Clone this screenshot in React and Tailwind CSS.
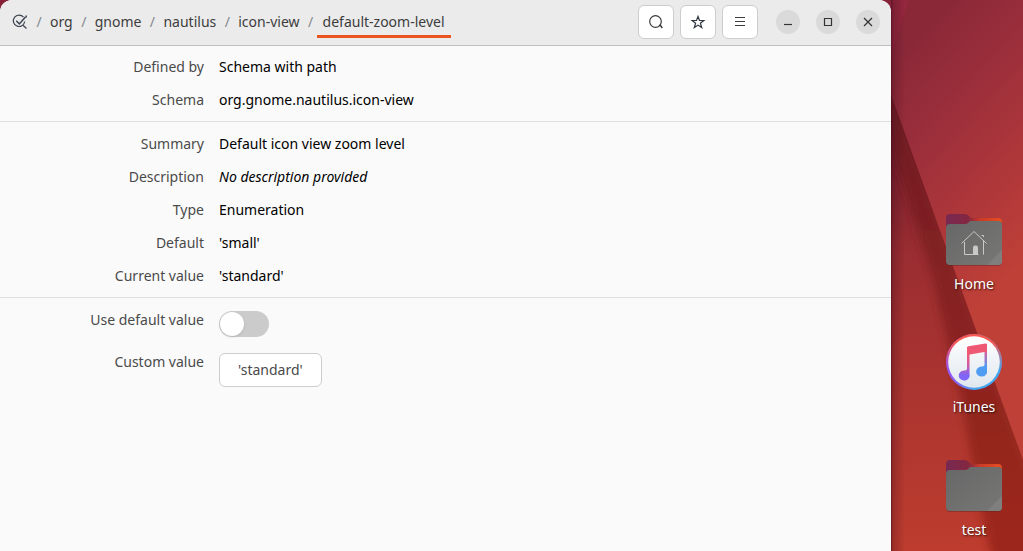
import { useState } from 'react';

const crumbs = ['org', 'gnome', 'nautilus', 'icon-view'];

const SearchIcon = () => (
  <svg className="w-4 h-4" viewBox="0 0 16 16" fill="none" stroke="#3d3d3d" strokeWidth="1.2">
    <circle cx="7.500" cy="7.500" r="5.800" />
    <path d="M11 11.500h1.500l1.800 2.500" strokeWidth="1.5" />
  </svg>
);

const StarIcon = () => (
  <svg className="w-4 h-4" viewBox="0 0 16 16" fill="none" stroke="#2f3640" strokeWidth="1.2">
    <path d="M8 2.5l1.5 4h4.3l-3.4 2.7 1.3 4.4L8 11.1l-3.7 2.5 1.3-4.4L2.2 6.500h4.300z" />
  </svg>
);

const MenuIcon = () => (
  <svg className="w-4 h-4" viewBox="0 0 16 16" fill="none" stroke="#3d3d3d">
    <path d="M3 3.500h10M3 7.500h10M3 11.500h10" />
  </svg>
);

const RootIcon = () => (
  <svg className="w-4 h-4" viewBox="0 0 16 16" fill="none" stroke="#3c4450" strokeWidth="1.2">
    <path d="M11.500 3.200A5.700 5.700 0 1 0 12.700 7.500" />
    <path d="M4.300 6.800l3 3.200L13.500 3" strokeWidth="1.500" />
    <path d="M11 11.300l3.500 3.200" />
    <path d="M14.200 1.500v2" strokeWidth="1.500" />
  </svg>
);

const ToolButton = ({ label, children }) => (
  <button
    aria-label={label}
    className="w-9 h-[34px] flex items-center justify-center bg-white border border-[#cdcdcd] rounded-md hover:bg-gray-50"
  >
    {children}
  </button>
);

const WindowButton = ({ label, d }) => (
  <button aria-label={label} className="w-6 h-6 flex items-center justify-center rounded-full bg-[#dadada] hover:bg-[#cfcfcf]">
    <svg className="w-4 h-4" viewBox="0 0 16 16" fill="none" stroke="#333" strokeWidth="1.2">
      <path d={d} />
    </svg>
  </button>
);

const Slash = () => <span className="w-[6px] text-center text-[#84898c]">/</span>;

const Header = () => (
  <header className="flex items-center justify-between h-[46px] pl-3 pr-[11px] pb-[2px] bg-[#ebebeb] border-b border-[#bfbfbf] rounded-t-xl">
    <nav aria-label="Path" className="flex items-center text-[#3d3d3d]">
      <button aria-label="Root" className="mr-2"><RootIcon /></button>
      {crumbs.map((name) => (
        <div key={name} className="flex items-center">
          <Slash />
          <a href="#" className="px-2">{name}</a>
        </div>
      ))}
      <Slash />
      <a href="#" aria-current="page" className="h-[33px] flex items-center ml-[3px] px-[6px] border-y-3 border-t-transparent border-b-[#e95420]">
        default-zoom-level
      </a>
    </nav>

    <div className="flex items-center gap-[6px]">
      <ToolButton label="Search"><SearchIcon /></ToolButton>
      <ToolButton label="Bookmarks"><StarIcon /></ToolButton>
      <ToolButton label="Menu"><MenuIcon /></ToolButton>
      <div className="flex items-center gap-4 ml-3">
        <WindowButton label="Minimize" d="M4 10.500h8" />
        <WindowButton label="Maximize" d="M4.500 4.500h7v7h-7z" />
        <WindowButton label="Close" d="M4 4l8 8M12 4l-8 8" />
      </div>
    </div>
  </header>
);

const Row = ({ label, italic, children }) => (
  <div className="flex items-center gap-[15px] h-[33px]">
    <dt className="w-51 text-right text-[#4a4a4a]">{label}</dt>
    <dd className={italic ? 'italic text-black' : 'text-black'}>{children}</dd>
  </div>
);

const Settings = () => {
  const [useDefault, setUseDefault] = useState(false);

  return (
    <main>
      <dl className="pt-1 pb-[5px] border-b border-[#dfdfdf]">
        <Row label="Defined by">Schema with path</Row>
        <Row label="Schema">org.gnome.nautilus.icon-view</Row>
      </dl>
      <dl className="py-[5px] border-b border-[#dfdfdf]">
        <Row label="Summary">Default icon view zoom level</Row>
        <Row label="Description" italic>No description provided</Row>
        <Row label="Type">Enumeration</Row>
        <Row label="Default">'small'</Row>
        <Row label="Current value">'standard'</Row>
      </dl>

      <div className="flex flex-col gap-4 pt-[13px] text-[#4a4a4a]">
        <div className="flex items-start gap-[15px]">
          <label htmlFor="use-default" className="w-51 text-right leading-[18px]">Use default value</label>
          <input
            id="use-default"
            type="checkbox"
            role="switch"
            checked={useDefault}
            onChange={(e) => setUseDefault(e.target.checked)}
            className="appearance-none w-[50px] h-[26px] p-px rounded-full bg-[#cbcbcb] checked:bg-[#e95420] before:block before:w-6 before:h-6 before:rounded-full before:bg-white before:shadow checked:before:ml-6"
          />
        </div>
        <div className="flex items-start gap-[15px]">
          <label htmlFor="custom-value" className="w-51 text-right leading-[18px]">Custom value</label>
          <button id="custom-value" className="h-[34px] px-[18px] bg-white border border-[#cdcdcd] rounded-md hover:bg-gray-50">
            'standard'
          </button>
        </div>
      </div>
    </main>
  );
};

const Folder = ({ id, home }) => (
  <svg className="w-14 h-14" viewBox="0 0 56 56">
    <defs>
      <linearGradient id={`${id}-tab`}>
        <stop offset="0" stopColor="#772953" />
        <stop offset="0.4" stopColor="#842740" />
        <stop offset="0.6" stopColor="#c93a28" />
        <stop offset="1" stopColor="#e9501f" />
      </linearGradient>
      <linearGradient id={`${id}-front`} x2="1" y2="1">
        <stop offset="0" stopColor="#666766" />
        <stop offset="1" stopColor="#777776" />
      </linearGradient>
    </defs>
    <path d="M0 7a4 4 0 0 1 4-4h15q2 0 3.500 1.500L25 7h27a4 4 0 0 1 4 4V24H0z" fill={`url(#${id}-tab)`} />
    <path d="M0 18a4 4 0 0 1 4-4h15q2 0 3.500-1.500L25 10h27a4 4 0 0 1 4 4v37a4 4 0 0 1-4 4H4a4 4 0 0 1-4-4z" fill="#5a2424" opacity="0.4" />
    <path d="M0 17a4 4 0 0 1 4-4h15q2 0 3.500-1.500L24 10h28a4 4 0 0 1 4 4v36a4 4 0 0 1-4 4H4a4 4 0 0 1-4-4z" fill={`url(#${id}-front)`} />
    <path d="M56 39v11a4 4 0 0 1-4 4H41z" fill="#7f7f7e" />
    {home && (
      <g fill="none" stroke="#c9c9c8">
        <path d="M15.500 32.500L28 20.500l12.500 12" />
        <path d="M18.500 31v12.500h14M37.500 29v14.500M37.500 26v-1.500h-2" />
        <path d="M27 44v-7.500a2 2 0 0 1 2-2h1a2 2 0 0 1 2 2V44z" fill="#c9c9c8" stroke="none" />
      </g>
    )}
  </svg>
);

const ITunes = () => (
  <svg className="w-14 h-14" viewBox="0 0 56 56">
    <defs>
      <linearGradient id="it-ring" y1="0.2" y2="0.400">
        <stop offset="0" stopColor="#9a4df5" />
        <stop offset="0.3" stopColor="#8a63f5" />
        <stop offset="0.65" stopColor="#43a8f0" />
      </linearGradient>
      <linearGradient id="it-top" x2="0" y2="1">
        <stop offset="0.15" stopColor="#f9574e" />
        <stop offset="0.65" stopColor="#e85a80" stopOpacity="0" />
      </linearGradient>
      <linearGradient id="it-disc" x2="0" y2="1">
        <stop offset="0" stopColor="#fff" />
        <stop offset="1" stopColor="#dfe7ee" />
      </linearGradient>
      <linearGradient id="it-left" x2="0" y2="1">
        <stop offset="0.2" stopColor="#f25a6e" />
        <stop offset="0.5" stopColor="#d75a9a" />
        <stop offset="0.85" stopColor="#7f66f8" />
      </linearGradient>
      <linearGradient id="it-right" x2="0" y2="1">
        <stop offset="0.1" stopColor="#ee5570" />
        <stop offset="0.4" stopColor="#b06fc0" />
        <stop offset="0.7" stopColor="#4f9df2" />
      </linearGradient>
    </defs>
    <circle cx="28" cy="28" r="28" fill="url(#it-ring)" />
    <circle cx="28" cy="28" r="28" fill="url(#it-top)" />
    <circle cx="28" cy="28" r="25.800" fill="url(#it-disc)" />
    <path d="M21 13h2.500v27a5.500 5 0 1 1-5.500-3.500q3 0 3-2z" fill="url(#it-left)" />
    <path d="M38.500 10H41v26.500a5.500 5 0 1 1-5.500-4q3 0 3-2z" fill="url(#it-right)" />
    <path d="M21 14q0-1.500 1.500-1.800L39.500 9.500q1.500-.2 1.500 1.300V17.500L21 21z" fill="#ee5872" />
  </svg>
);

const Wallpaper = () => (
  <svg className="absolute inset-0 w-full h-full" viewBox="0 0 132 551" preserveAspectRatio="none" aria-hidden="true">
    <defs>
      <linearGradient id="wp-light" gradientUnits="userSpaceOnUse" x1="0" y1="60" x2="170" y2="220">
        <stop offset="0" stopColor="#8a2838" />
        <stop offset="0.35" stopColor="#9c2f3b" />
        <stop offset="0.8" stopColor="#b53a39" />
        <stop offset="1.0" stopColor="#be4037" />
      </linearGradient>
      <linearGradient id="wp-low" gradientUnits="userSpaceOnUse" x1="0" y1="95" x2="0" y2="551">
        <stop offset="0.1" stopColor="#741f2e" />
        <stop offset="0.35" stopColor="#9a2d31" />
        <stop offset="0.65" stopColor="#ab3530" />
        <stop offset="1" stopColor="#bd3c2e" />
      </linearGradient>
      <linearGradient id="wp-band" x2="0" y2="1">
        <stop offset="0" stopColor="#681a20" />
        <stop offset="0.4" stopColor="#842123" />
        <stop offset="0.9" stopColor="#9c281c" />
      </linearGradient>
      <linearGradient id="wp-shadow">
        <stop offset="0" stopColor="#3a0818" stopOpacity="0.600" />
        <stop offset="0.15" stopColor="#3a0818" stopOpacity="0.250" />
        <stop offset="1" stopColor="#3a0818" stopOpacity="0" />
      </linearGradient>
      <filter id="wp-soft" x="-20%" width="140%"><feGaussianBlur stdDeviation="4" /></filter>
      <clipPath id="wp-clip"><path d="M0 95L132 460V551H0z" /></clipPath>
    </defs>
    <rect width="132" height="551" fill="url(#wp-light)" />
    <path d="M0 0h18L2 50H0z" fill="#93273e" />
    <path d="M0 95L132 460V551H0z" fill="url(#wp-low)" />
    <g clipPath="url(#wp-clip)">
      <path d="M-10 60L150 500V580H106L90 510 72 410 42 280 0 145z" fill="url(#wp-band)" filter="url(#wp-soft)" />
    </g>
    <rect width="14" height="551" fill="url(#wp-shadow)" />
  </svg>
);

const Shortcut = ({ name, children }) => (
  <button className="w-24 flex flex-col items-center gap-[7px] text-white">
    {children}
    <span className="leading-5 [text-shadow:1px_1px_2px_rgba(0,0,0,0.7)]">{name}</span>
  </button>
);

const Desktop = () => (
  <aside className="relative w-[132px] shrink-0">
    <Wallpaper />
    <div className="relative flex flex-col items-end gap-10 pt-[211px] pr-px">
      <Shortcut name="Home"><Folder id="home" home /></Shortcut>
      <Shortcut name="iTunes"><ITunes /></Shortcut>
      <Shortcut name="test"><Folder id="test" /></Shortcut>
    </div>
  </aside>
);

export default function App() {
  return (
    <div className="flex min-h-screen bg-[#852238] font-['Noto_Sans','Open_Sans',sans-serif] text-[14px] leading-5">
      <div className="flex-1 min-w-0 bg-[#fafafa] rounded-t-xl">
        <Header />
        <Settings />
      </div>
      <Desktop />
    </div>
  );
}
